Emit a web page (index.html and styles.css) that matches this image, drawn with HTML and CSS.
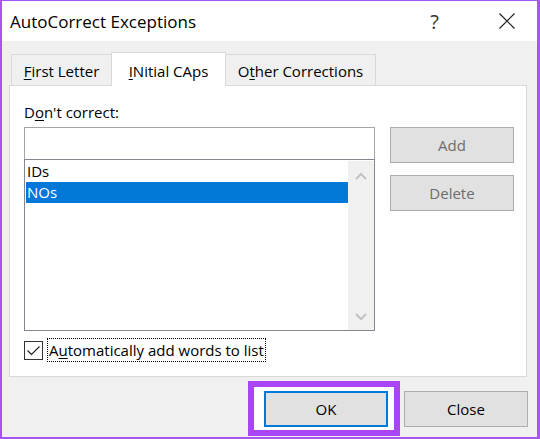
FILE: index.html
```html
<!DOCTYPE html>
<html lang="en">
<head>
    <meta charset="UTF-8">
    <meta name="viewport" content="width=device-width, initial-scale=1">
    <title>AutoCorrect Exceptions</title>
    <link rel="stylesheet" href="styles.css">
</head>
<body>
<div class="dialog">
    <div class="dialog-title">
        <span class="dialog-caption">AutoCorrect Exceptions</span>
        <span class="dialog-help">?</span>
        <svg class="dialog-close" width="16" height="16" viewBox="0 0 16 16">
            <path d="M0.5 0.5 L15.5 15.5 M15.5 0.5 L0.5 15.5" stroke="#1a1a1a" stroke-width="1.1" fill="none"/>
        </svg>
    </div>

    <div class="dialog-body">
        <div class="tabs">
            <div class="tab tab-first"><span><u>F</u>irst Letter</span></div>
            <div class="tab tab-caps active"><span><u>I</u>Nitial CAps</span></div>
            <div class="tab tab-other"><span>O<u>t</u>her Corrections</span></div>
        </div>

        <div class="tab-panel">
            <div class="field-label">D<u>o</u>n't correct:</div>
            <div class="field-row">
                <div class="word-box">
                    <div class="word-input"></div>
                    <div class="word-list">
                        <div class="word-items">
                            <div class="word-item">IDs</div>
                            <div class="word-item selected">NOs</div>
                        </div>
                        <div class="scrollbar">
                            <svg width="12" height="8" viewBox="0 0 12 8">
                                <path d="M1 7 L6 2 L11 7" stroke="#c2c2c2" stroke-width="2" fill="none"/>
                            </svg>
                            <svg width="12" height="8" viewBox="0 0 12 8">
                                <path d="M1 1 L6 6 L11 1" stroke="#c2c2c2" stroke-width="2" fill="none"/>
                            </svg>
                        </div>
                    </div>
                    <label class="check-row">
                        <span class="check-box">
                            <svg width="17" height="17" viewBox="0 0 17 17">
                                <path d="M2.5 8.5 L6.5 12.5 L14.5 4.5" stroke="#222" stroke-width="1.2" fill="none"/>
                            </svg>
                        </span>
                        <span class="check-label">A<u>u</u>tomatically add words to list</span>
                    </label>
                </div>
                <div class="side-buttons">
                    <button class="btn" disabled>Add</button>
                    <button class="btn" disabled>Delete</button>
                </div>
            </div>
        </div>

        <div class="dialog-footer">
            <div class="highlight">
                <button class="btn btn-default">OK</button>
            </div>
            <button class="btn btn-close">Close</button>
        </div>
    </div>
</div>
</body>
</html>
```

FILE: styles.css
```css
* {
    margin: 0;
    padding: 0;
    box-sizing: border-box;
}

html,
body {
    width: 100%;
    height: 100%;
}

body {
    font-family: "Open Sans", "Noto Sans", sans-serif;
    font-size: 15px;
    color: #000000;
    background: #ffffff;
}

u {
    text-decoration-thickness: 1px;
    text-underline-offset: 2px;
}

.dialog {
    width: 540px;
    height: 439px;
    border: 2px solid #a855f7;
    border-top-width: 1px;
    border-right-width: 3px;
    background: #f0f0f0;
    display: flex;
    flex-direction: column;
}

.dialog-title {
    height: 40px;
    background: #ffffff;
    display: flex;
    align-items: center;
    padding-left: 8px;
}

.dialog-caption {
    font-size: 17px;
    flex: 1;
}

.dialog-help {
    font-size: 20px;
    color: #333333;
    margin-right: 60px;
}

.dialog-close {
    margin-right: 22px;
}

.dialog-body {
    flex: 1;
    padding: 11px 10px 0 7px;
}

/* tab strip */
.tabs {
    display: flex;
    align-items: flex-end;
    height: 33px;
    margin-left: 2px;
}

.tab {
    height: 31px;
    border: 1px solid #d9d9d9;
    border-bottom: none;
    display: flex;
    justify-content: center;
    align-items: flex-end;
    padding-bottom: 3px;
    line-height: 22px;
    white-space: nowrap;
}

.tab-first {
    width: 101px;
}

.tab-caps {
    width: 115px;
    margin-left: -1px;
}

.tab-other {
    width: 151px;
    margin-left: -1px;
}

.tab.active {
    height: 34px;
    margin-bottom: -1px;
    padding-bottom: 4px;
    background: #ffffff;
    position: relative;
    z-index: 1;
}

.tab-panel {
    height: 292px;
    background: #ffffff;
    border: 1px solid #d9d9d9;
    padding: 16px 0 0 14px;
}

.field-label {
    line-height: 20px;
    margin-bottom: 5px;
}

.field-row {
    display: flex;
    gap: 15px;
}

.word-box {
    width: 351px;
}

.word-input {
    height: 32px;
    border: 1px solid #a5a5a5;
    border-bottom: none;
}

.word-list {
    height: 172px;
    border: 1px solid #828790;
    padding: 1px 0 0 1px;
    display: flex;
}

.word-items {
    flex: 1;
}

.word-item {
    height: 21px;
    line-height: 21px;
    padding-left: 1px;
}

.word-item.selected {
    background: #0078d7;
    color: #ffffff;
}

.scrollbar {
    width: 26px;
    background: #f0f0f0;
    display: flex;
    flex-direction: column;
    justify-content: space-between;
    align-items: center;
    padding: 11px 0 9px;
}

.check-row {
    display: flex;
    align-items: center;
    margin-top: 7px;
}

.check-box {
    width: 19px;
    height: 19px;
    border: 1px solid #333333;
    display: flex;
    align-items: center;
    justify-content: center;
}

.check-label {
    margin-left: 4px;
    height: 24px;
    line-height: 22px;
    padding: 0 1px;
    border: 1px dotted #000000;
}

.side-buttons {
    display: flex;
    flex-direction: column;
    gap: 12px;
}

.btn {
    width: 124px;
    height: 36px;
    font: inherit;
    color: #000000;
    background: #e1e1e1;
    border: 1px solid #adadad;
}

.btn:disabled {
    color: #6d6d6d;
}

.dialog-footer {
    display: flex;
    justify-content: flex-end;
    align-items: flex-start;
    padding-top: 4px;
    margin-right: -1px;
}

.highlight {
    border: 6px solid #a945f5;
    background: #ffffff;
    padding: 4px 6px 3px 10px;
}

.btn-default {
    border: 2px solid #0078d7;
}

.btn-close {
    margin-top: 10px;
    margin-left: 4px;
}
```
